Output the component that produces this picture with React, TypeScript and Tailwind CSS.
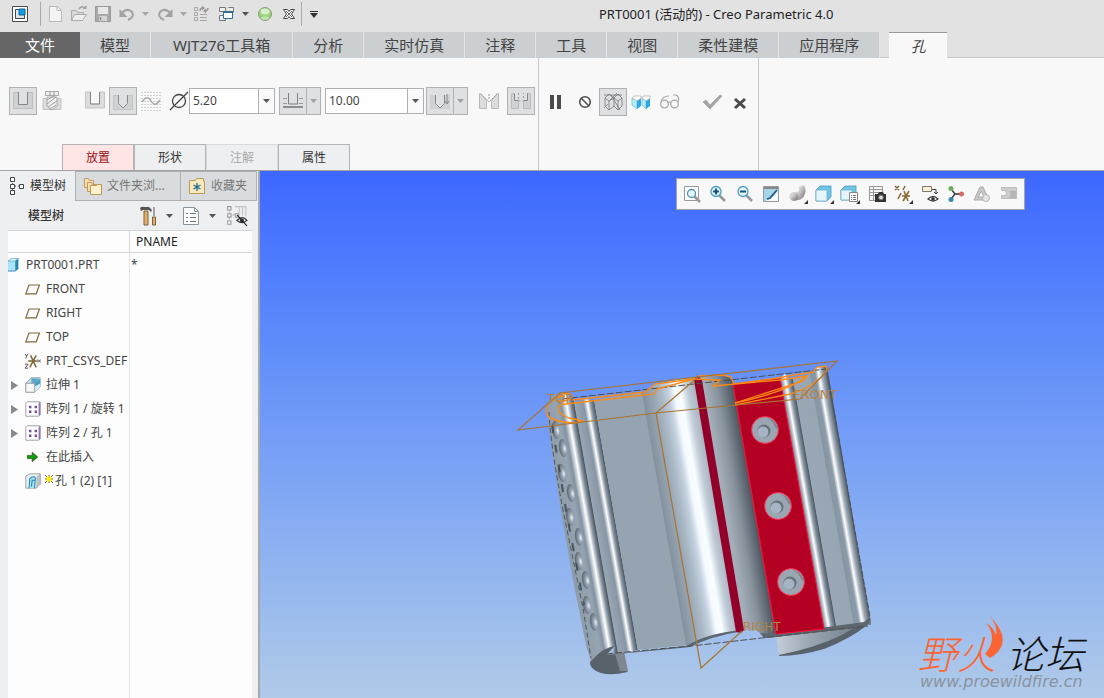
import { useState, type ReactNode } from "react";

const ribbonTabs = ["模型", "WJT276工具箱", "分析", "实时仿真", "注释", "工具", "视图", "柔性建模", "应用程序"];

interface IconProps {
  children: ReactNode;
  className?: string;
}

// All toolbar drawings share a 20x20 grid
function Icon({ children, className = "w-5 h-5" }: IconProps) {
  return (
    <svg viewBox="0 0 20 20" fill="none" className={`shrink-0 ${className}`} aria-hidden="true">
      {children}
    </svg>
  );
}

function Caret({ className = "text-[#555]" }: { className?: string }) {
  return (
    <svg viewBox="0 0 7 4" className={`w-[7px] h-1 shrink-0 ${className}`} aria-hidden="true">
      <path d="M0 0h7L3.5 4z" fill="currentColor" />
    </svg>
  );
}

interface ToolButtonProps {
  label: string;
  children: ReactNode;
  className?: string;
}

function ToolButton({ label, children, className = "w-6 h-6" }: ToolButtonProps) {
  return (
    <button type="button" title={label} aria-label={label} className={`flex shrink-0 items-center justify-center ${className}`}>
      {children}
    </button>
  );
}

const pressed = "w-7 h-7 border border-[#b0b1b3] bg-[#dfe0e2]";

function QuickAccess() {
  return (
    <div className="flex items-center h-7">
      <ToolButton label="窗口" className="w-10 h-7">
        <Icon>
          <path d="M2.5 2.5h15v15h-15z" fill="#fff" stroke="#4a4a4a" />
          <path d="M5.5 5.5h9v9h-9z" fill="#dde5ea" stroke="#3c4a55" />
          <path d="M9 5h6v6H9z" fill="#0c9fe5" stroke="#1b5f86" />
        </Icon>
      </ToolButton>
      <span className="w-px h-6 bg-[#aaa]" />
      <div className="flex items-center pl-0.5">
        <ToolButton label="新建">
          <Icon>
            <path d="M4.5 2.500h8l4 4v11h-12z" fill="#f4f4f4" stroke="#b8b8b8" />
            <path d="M12 2.500v4h4" stroke="#b8b8b8" />
          </Icon>
        </ToolButton>
        <ToolButton label="打开">
          <Icon>
            <path d="M2.500 16.500v-10h5l1 2h6v2" fill="#dadada" stroke="#aaa" />
            <path d="M2.500 16.500l3-6h12l-4 6z" fill="#ededed" stroke="#aaa" />
            <path d="M10 5q3-4 6-1" stroke="#a0a0a0" strokeWidth="1.500" />
            <path d="M13.500 5h4V1z" fill="#a0a0a0" />
          </Icon>
        </ToolButton>
        <ToolButton label="保存">
          <Icon>
            <path d="M2.500 2.500h15v15h-15z" fill="#a9a9a9" stroke="#999" />
            <path d="M5 3h10v7H5z" fill="#e8e8e8" />
            <path d="M6 12h8v5H6z" fill="#d5d5d5" />
            <path d="M7.500 13v3" stroke="#888" strokeWidth="1.500" />
          </Icon>
        </ToolButton>
        <ToolButton label="撤消">
          <Icon>
            <path d="M5 9q4-5 9-2 5 5-3 9" stroke="#a3a3a3" strokeWidth="2" />
            <path d="M2.500 5v8h8z" fill="#a3a3a3" />
          </Icon>
        </ToolButton>
        <ToolButton label="撤消列表" className="w-3 h-6"><Caret className="text-[#a6a6a6]" /></ToolButton>
        <ToolButton label="重做" className="w-7 h-6">
          <Icon>
            <path d="M15 9q-4-5-9-2-5 5 3 9" stroke="#a3a3a3" strokeWidth="2" />
            <path d="M17.500 5v8h-8z" fill="#a3a3a3" />
          </Icon>
        </ToolButton>
        <ToolButton label="重做列表" className="w-2 h-6"><Caret className="text-[#a6a6a6]" /></ToolButton>
        <ToolButton label="重新生成" className="w-7 h-6">
          <Icon>
            <path d="M3.500 3.500h3v3h-3zM3.500 8.500h3v3h-3zM3.500 13.500h3v3h-3zM9 10.500h7M9 13.500h7M9 16.500h7" stroke="#a8a8a8" />
            <path d="M9 7q0-3 3-3M17 4q0 3-3 3" stroke="#999" strokeWidth="1.500" />
            <path d="M11 1.500l3 2.500-3 2.500zM15 4.500L12 7l3 2.500z" fill="#999" />
          </Icon>
        </ToolButton>
        <ToolButton label="窗口列表">
          <Icon>
            <path d="M2.500 3.500h6v4h-6zM11.500 3.500h5v5M2.500 11.500h6v5h-6z" fill="#eee" stroke="#777" />
            <path d="M6.500 7.500h9v7h-9z" fill="#fff" stroke="#31708f" />
            <path d="M6 8h10" stroke="#31708f" strokeWidth="2" />
          </Icon>
        </ToolButton>
        <ToolButton label="更多窗口" className="w-3 h-6"><Caret /></ToolButton>
        <ToolButton label="状态" className="w-7 h-6">
          <Icon>
            <circle cx="10" cy="10" r="6.500" fill="#9bd07d" stroke="#8a9b83" />
            <ellipse cx="10" cy="7.500" rx="4.500" ry="3" fill="#d6efc8" />
            <ellipse cx="10" cy="14" rx="4" ry="1.500" fill="#c3e8ae" />
          </Icon>
        </ToolButton>
        <ToolButton label="关闭" className="w-5 h-6">
          <Icon>
            <path d="M4.500 5.500h4l1.500 2 1.500-2h4L12.500 10l3 4.500h-4l-1.500-2-1.500 2h-4l3-4.500z" fill="#fff" stroke="#444" />
            <path d="M7 7l6 6M13 7l-6 6" stroke="#666" />
          </Icon>
        </ToolButton>
      </div>
      <span className="w-px h-6 ml-0.5 bg-[#aaa]" />
      <ToolButton label="自定义" className="w-6 h-6">
        <Icon>
          <path d="M6 7.500h8" stroke="#333" />
          <path d="M6 9h8l-4 5z" fill="#333" />
        </Icon>
      </ToolButton>
    </div>
  );
}

function Combo({ label, value, onChange, className }: { label: string; value: string; onChange: (v: string) => void; className: string }) {
  return (
    <div className={`flex h-[26px] shrink-0 border border-[#aeb0b2] bg-white ${className}`}>
      <input aria-label={label} value={value} onChange={(e) => onChange(e.target.value)} className="min-w-0 flex-1 px-[3px] text-[12px] text-[#444] outline-none" />
      <button type="button" aria-label={`${label}列表`} className="flex w-4 items-center justify-center border-l border-[#aeb0b2] bg-[#fafafa]">
        <Caret />
      </button>
    </div>
  );
}

function SplitButton({ label, children }: { label: string; children: ReactNode }) {
  return (
    <div className="flex h-7 w-[42px] shrink-0 border border-[#b0b1b3] bg-[#dfe0e2]">
      <button type="button" aria-label={label} className="flex flex-1 items-center justify-center">{children}</button>
      <button type="button" aria-label={`${label}选项`} className="flex w-3.5 items-center justify-center border-l border-[#b0b1b3]">
        <Caret className="text-[#a0a0a0]" />
      </button>
    </div>
  );
}

function HoleControls() {
  const [diameter, setDiameter] = useState("5.20");
  const [depth, setDepth] = useState("10.00");
  return (
    <div className="flex items-center h-7 mt-[29px] pl-[9px]">
      <ToolButton label="简单孔" className={pressed}>
        <Icon>
          <path d="M.5 1.500h19v16H.500z" fill="#d0d1d2" stroke="#bfbfbf" />
          <path d="M5 1h10v13H5z" fill="#dfe0e2" />
          <path d="M5.500 1v12.500h9V1" stroke="#858585" />
        </Icon>
      </ToolButton>
      <ToolButton label="标准孔" className="w-7 h-7 ml-px">
        <Icon>
          <path d="M1 7.500h18v11H1z" fill="#dcdcdc" stroke="#c4c4c4" />
          <path d="M5 6h10v9l-5 4-5-4z" fill="#f3f3f3" stroke="#999" strokeWidth=".8" />
          <path d="M3.500.500h13v4h-13z" fill="#eee" stroke="#aaa" />
          <path d="M5 9l7-4M5 13l9-7M6 16l9-6M8 18l6-4M8 1v4M12 1v4" stroke="#999" />
        </Icon>
      </ToolButton>
      <ToolButton label="矩形轮廓" className="w-7 h-7 ml-[15px]">
        <Icon>
          <path d="M.5 1h5v12h9V1h5v16H.500z" fill="#dcdcdc" stroke="#c4c4c4" />
          <path d="M5.500 1v12h9V1" stroke="#858585" />
        </Icon>
      </ToolButton>
      <ToolButton label="标准轮廓" className={pressed}>
        <Icon>
          <path d="M.5 4.500h19v14H.500z" fill="#d0d1d2" stroke="#c4c4c4" />
          <path d="M5 4h10v9l-5 5-5-5z" fill="#dfe0e2" />
          <path d="M5.500 4v8.500L10 17l4.500-4.500V4" stroke="#8a8a8a" />
        </Icon>
      </ToolButton>
      <ToolButton label="草绘" className="w-7 h-7">
        <Icon>
          <path d="M.5 1.500h19M.5 4.500h19M.5 7.500h19M.5 10.500h19M.5 13.500h19M.5 16.500h19M.5 19.500h19" stroke="#aaa" strokeDasharray="1 2" />
          <path d="M1 11q5-8 9-1t9-1" stroke="#aaa" strokeWidth="1.500" />
        </Icon>
      </ToolButton>
      <Icon className="w-5 h-5 ml-1">
        <circle cx="10" cy="10" r="6.500" stroke="#444" strokeWidth="1.300" />
        <path d="M1 19L19 1" stroke="#444" strokeWidth="1.300" />
      </Icon>
      <Combo label="直径" value={diameter} onChange={setDiameter} className="w-[86px]" />
      <div className="ml-1">
        <SplitButton label="深度类型">
          <Icon>
            <path d="M0 7.500h4M0 12.500h4M16 7.500h4M16 12.500h4" stroke="#999" />
            <path d="M5.500 2v11h9V2" stroke="#808080" />
            <path d="M0 16h20" stroke="#8d8d8d" strokeWidth="2" />
          </Icon>
        </SplitButton>
      </div>
      <Combo label="深度" value={depth} onChange={setDepth} className="ml-1 w-[99px]" />
      <div className="ml-0.5">
        <SplitButton label="钻孔深度">
          <Icon>
            <path d="M0 4h20v14H0z" fill="#d0d1d2" />
            <path d="M5.500 4v8.500L10 17l4.500-4.500V4" fill="#dfe0e2" stroke="#8a8a8a" />
            <path d="M17 3v9M15 10l2 3 2-3" stroke="#888" />
          </Icon>
        </SplitButton>
      </div>
      <ToolButton label="沉头孔" className="w-7 h-7 ml-[7px]">
        <Icon>
          <path d="M.5 2.500h1l6 7v8h-7zM19.500 2.500h-1l-6 7v8h7z" fill="#dcdcdc" stroke="#b8b8b8" />
          <path d="M2 3l8 8 8-8M10 3v6" stroke="#999" strokeDasharray="2 1" />
        </Icon>
      </ToolButton>
      <ToolButton label="沉孔" className={`${pressed} ml-1`}>
        <Icon>
          <path d="M.5 2.500h3v7h4v8h-7zM19.500 2.500h-3v7h-4v8h7z" fill="#d0d1d2" stroke="#bbb" />
          <path d="M3.500 2.500v7h4M16.500 2.500v7h-4" stroke="#888" />
          <path d="M7.500 2v8h5V2" stroke="#999" strokeDasharray="2 2" />
        </Icon>
      </ToolButton>
    </div>
  );
}

function FeatureControls() {
  return (
    <div className="flex items-center h-7 mt-[30px] pl-[3px]">
      <ToolButton label="暂停" className="w-7 h-7">
        <Icon><path d="M4 3h4v14H4zM11 3h4v14h-4z" fill="#4b4b4b" /></Icon>
      </ToolButton>
      <ToolButton label="无预览" className="w-7 h-7 ml-px">
        <Icon>
          <circle cx="10" cy="10" r="5.300" stroke="#505050" strokeWidth="1.600" />
          <path d="M6 6l8 8" stroke="#505050" strokeWidth="1.600" />
        </Icon>
      </ToolButton>
      <ToolButton label="分离" className={pressed}>
        <Icon>
          <path d="M2 6l4 3v9l-4-4zM6 9l5-3v8l-5 4M11 6l4 3v9l-4-4M15 9l4-3v8l-4 4M2 6l4-4 5 4 4-4 4 4M1 16l4-4M7 8l7-7M1 3h18M8 3l9 15" stroke="#777" strokeWidth=".8" />
        </Icon>
      </ToolButton>
      <ToolButton label="附着" className="w-7 h-7">
        <Icon>
          <path d="M1 6l5 3v8l-5-4zM11 6l4 3v8l-4-4z" fill="#b9ecfb" stroke="#6fb9d4" strokeWidth=".7" />
          <path d="M6 9l4-3v8l-4 3zM15 9l4-3v8l-4 3z" fill="#29a9e8" />
          <path d="M1 6l2-2h7v2L6 9zM11 6l1-2h7v2l-4 3z" fill="#fff" stroke="#aaa" strokeWidth=".7" />
        </Icon>
      </ToolButton>
      <ToolButton label="验证" className="w-[30px] h-7">
        <Icon>
          <circle cx="4.500" cy="12" r="3.800" stroke="#a9a9a9" strokeWidth="1.300" />
          <circle cx="14.500" cy="12" r="3.800" stroke="#a9a9a9" strokeWidth="1.300" />
          <path d="M8 11q2-2 3 0M1 10q1-6 8-6M18 10q2-5-2-7h-3" stroke="#a9a9a9" strokeWidth="1.200" />
        </Icon>
      </ToolButton>
      <ToolButton label="确定" className="w-7 h-7 ml-[13px]">
        <Icon><path d="M1 10l3-2 4 5 10-10 2 1L8 17z" fill="#a3a3a3" stroke="#999" strokeWidth=".6" /></Icon>
      </ToolButton>
      <ToolButton label="取消" className="w-7 h-7">
        <Icon><path d="M5 7l10 9M15 7L5 16" stroke="#4a4a4a" strokeWidth="3" /></Icon>
      </ToolButton>
    </div>
  );
}

function Ribbon() {
  return (
    <section className="flex h-[113px] shrink-0 border-b border-[#a3a3a3] bg-[#f8f8f8]">
      <div className="flex w-[539px] shrink-0 flex-col justify-between border-r border-[#c6c8ca]">
        <HoleControls />
        <div className="flex pl-[62px] text-[12px]">
          <button type="button" className="h-[26px] w-[72px] border border-b-0 border-[#b5b5b5] bg-[#ffe5e5] text-[#9b0f16]">放置</button>
          <button type="button" className="h-[26px] w-[72px] border border-b-0 border-[#b5b5b5] bg-[#eeeff1] text-[#333]">形状</button>
          <button type="button" disabled className="h-[26px] w-[72px] border border-b-0 border-[#dadbdc] bg-[#eeeff1] text-[#aaa]">注解</button>
          <button type="button" className="h-[26px] w-[72px] border border-b-0 border-[#b5b5b5] bg-[#eeeff1] text-[#333]">属性</button>
        </div>
      </div>
      <div className="w-[220px] shrink-0 border-r border-[#c6c8ca]">
        <FeatureControls />
      </div>
    </section>
  );
}

const TreeGlyph = () => (
  <Icon className="w-5 h-5">
    <path d="M4.500 2v16M5 10h8" stroke="#555" strokeDasharray="3 2" />
    <path d="M2.500 1.500h4v4h-4zM2.500 8.500h4v4h-4zM2.500 14.500h4v4h-4zM11.500 8.500h4v4h-4z" fill="#fff" stroke="#444" />
  </Icon>
);

const PlaneGlyph = () => (
  <Icon className="w-4 h-4"><path d="M5 5h13l-4 11H1z" stroke="#82683c" strokeWidth="1.500" /></Icon>
);

const PatternGlyph = () => (
  <Icon className="w-4 h-4">
    <path d="M1 3l2-2h16v16l-2 2H1z" fill="#fff" stroke="#8b8894" />
    <path d="M18 2v16" stroke="#8d74b5" strokeWidth="2" />
    <path d="M5 6h3v3H5zM12 6h3v3h-3zM5 12h3v3H5zM12 12h3v3h-3z" fill="#734f9b" />
  </Icon>
);

const PartGlyph = () => (
  <Icon className="w-4 h-4">
    <path d="M0 5h9v13H0z" fill="#a9e4fb" />
    <path d="M0 5l4-3h9L9 5z" fill="#e6f8ff" stroke="#4a9dbd" strokeWidth=".8" />
    <path d="M9 5l4-3v13l-4 3z" fill="#2a87b0" />
    <path d="M0 17.500h9" stroke="#3a7f9c" />
  </Icon>
);

const ExtrudeGlyph = () => (
  <Icon className="w-4 h-4">
    <path d="M1 8l7-7h11v11l-7 7H1z" fill="#bfe2f1" stroke="#8a9299" />
    <path d="M12 8l7-7v11l-7 7z" fill="#cdeefb" />
    <path d="M8 2h10l-6 7H8z" fill="#5aa9cd" />
    <path d="M12 8l7-6v6l-7 4z" fill="#4a9dc4" />
    <path d="M1 8h11v11H1z" fill="#f7f7f7" stroke="#999" />
  </Icon>
);

const HoleGlyph = () => (
  <Icon className="w-4 h-4">
    <path d="M1 4l5-3h13v12l-5 6H1z" fill="#e8eef1" stroke="#8d9499" />
    <path d="M5 19l1-12q4-4 7-1l-1 13M8 17l1-8h3" fill="#a6e2f6" stroke="#2586b0" strokeWidth="1.300" />
    <path d="M15 5v13l4-4V2z" fill="#c2c7ca" stroke="#9aa1a6" strokeWidth=".8" />
  </Icon>
);

// The axis letters are part of the coordinate system symbol
const CsysGlyph = () => (
  <Icon className="w-4 h-4">
    <path d="M4 10h12M7 3l7 15M14 3L6 18" stroke="#7d6234" strokeWidth="1.800" />
    <path d="M0 1l2 3 2-3M2 4L1 7M16 8l4 4M20 8l-4 4M0 14h4l-4 5h4" stroke="#333" />
  </Icon>
);

const InsertGlyph = () => (
  <Icon className="w-4 h-4">
    <path d="M3 8h6V4l7 6-7 6v-4H3z" fill="#0a9a0a" stroke="#333d14" strokeWidth=".8" />
  </Icon>
);

interface TreeRow {
  id: string;
  label: string;
  icon: ReactNode;
  expandable?: boolean;
  isNew?: boolean;
}

const treeRows: TreeRow[] = [
  { id: "front", label: "FRONT", icon: <PlaneGlyph /> },
  { id: "right", label: "RIGHT", icon: <PlaneGlyph /> },
  { id: "top", label: "TOP", icon: <PlaneGlyph /> },
  { id: "csys", label: "PRT_CSYS_DEF", icon: <CsysGlyph /> },
  { id: "extrude", label: "拉伸 1", icon: <ExtrudeGlyph />, expandable: true },
  { id: "pattern1", label: "阵列 1 / 旋转 1", icon: <PatternGlyph />, expandable: true },
  { id: "pattern2", label: "阵列 2 / 孔 1", icon: <PatternGlyph />, expandable: true },
  { id: "insert", label: "在此插入", icon: <InsertGlyph /> },
  { id: "hole", label: "孔 1 (2) [1]", icon: <HoleGlyph />, isNew: true },
];

function ModelTree() {
  return (
    <div className="ml-2 mr-1.5 min-h-0 flex-1 border-t border-[#d3d5d7] bg-[#fdfdfd] flex flex-col">
      <table className="w-full table-fixed border-separate border-spacing-0 text-[12px] text-[#444]">
        <thead>
          <tr>
            <th className="h-[22px] w-[122px] border-b border-r border-[#d3d5d7] p-0" aria-label="名称" />
            <th className="h-[22px] border-b border-[#d3d5d7] p-0 pl-1.5 text-left font-normal text-[#222]">PNAME</th>
          </tr>
        </thead>
        <tbody>
          <tr>
            <td className="h-6 border-r border-[#e3e4e6] p-0">
              <div className="flex items-center gap-0.5"><PartGlyph /><span>PRT0001.PRT</span></div>
            </td>
            <td className="p-0 pl-px">*</td>
          </tr>
          {treeRows.map((row) => (
            <tr key={row.id}>
              <td className="h-6 overflow-hidden border-r border-[#e3e4e6] p-0">
                <div className="flex items-center whitespace-nowrap">
                  <span className="w-[17px] shrink-0">
                    {row.expandable && (
                      <button type="button" aria-label={`展开 ${row.label}`} className="block pl-[3px]">
                        <svg viewBox="0 0 7 9" className="w-[7px] h-[9px]"><path d="M0 0l7 4.500L0 9z" fill="#888" /></svg>
                      </button>
                    )}
                  </span>
                  {row.icon}
                  {row.isNew && (
                    <svg viewBox="0 0 8 8" className="ml-1 w-2 h-2 mb-1 shrink-0">
                      <path d="M0 0l8 8M8 0L0 8M4 0v8M0 4h8" stroke="#333" strokeWidth=".8" />
                      <path d="M1.500 1.500h5v5h-5z" fill="#ffef00" />
                    </svg>
                  )}
                  <span className={row.isNew ? "ml-0.5" : "ml-[5px]"}>{row.label}</span>
                </div>
              </td>
              <td />
            </tr>
          ))}
        </tbody>
      </table>
      <div className="w-[122px] flex-1 border-r border-[#e3e4e6]" />
    </div>
  );
}

function FolderIcon({ star = false }: { star?: boolean }) {
  return (
    <Icon>
      {star ? (
        <>
          <path d="M2.500 4.500h6l1-2h7v3h1v12h-15z" fill="#fbe9bd" stroke="#b99a5b" />
          <path d="M10 7v8M6.500 9l7 4M13.500 9l-7 4" stroke="#1d6d8f" strokeWidth="1.300" />
        </>
      ) : (
        <>
          <path d="M1.500 2.500h4l1 2h4v7h-9z" fill="#f7deb0" stroke="#c4975a" />
          <path d="M4.500 6.500h4l1 2h5v7h-10z" fill="#f7deb0" stroke="#c4975a" />
          <path d="M7.500 9.500h6l1-1h4v10h-11z" fill="#fdf0cf" stroke="#c4975a" />
        </>
      )}
    </Icon>
  );
}

function Sidebar() {
  return (
    <aside className="flex w-[260px] shrink-0 flex-col border-r-2 border-[#a7a9ac] bg-[#eeeff1]">
      <div role="tablist" className="flex h-[30px] shrink-0 text-[12px] text-[#777]">
        <button type="button" role="tab" aria-selected="true" className="flex w-[75px] items-center pl-2 text-[#333]">
          <TreeGlyph /><span className="ml-0.5 whitespace-nowrap">模型树</span>
        </button>
        <button type="button" role="tab" aria-selected="false" className="flex w-[106px] items-center gap-1 border border-[#adafb1] bg-[#d9dcde] pl-[7px]">
          <FolderIcon /><span className="whitespace-nowrap">文件夹浏...</span>
        </button>
        <button type="button" role="tab" aria-selected="false" className="flex w-[76px] items-center gap-1 border border-l-0 border-[#adafb1] bg-[#d9dcde] pl-1.5">
          <FolderIcon star /><span className="whitespace-nowrap">收藏夹</span>
        </button>
      </div>
      <div className="flex h-[29px] shrink-0 items-center pl-7 pr-[7px]">
        <h2 className="flex-1 text-[12px] font-medium text-[#333]">模型树</h2>
        <ToolButton label="设置">
          <Icon>
            <path d="M1 2q2-2 4-1h5l3 3-1 2-2-2H4L2 5z" fill="#555" />
            <path d="M5 5h4v14H5z" fill="#e0b06a" stroke="#7d6338" />
            <path d="M15 1v9" stroke="#888" strokeWidth="1.500" />
            <path d="M13.500 11h3v8h-3z" fill="#e0b06a" stroke="#7d6338" />
          </Icon>
        </ToolButton>
        <ToolButton label="设置列表" className="w-4 h-6"><Caret /></ToolButton>
        <ToolButton label="显示" className="w-7 h-6">
          <Icon>
            <path d="M2.500 1.500h11l4 4v13h-15z" fill="#fafcfd" stroke="#8795a0" />
            <path d="M13.500 1.500v4h4" stroke="#8795a0" />
            <path d="M5 7.500h2M5 11.500h2M5 15.500h2M9 7.500h6M9 11.500h6M9 15.500h6" stroke="#777" />
          </Icon>
        </ToolButton>
        <ToolButton label="显示列表" className="w-3.5 h-6"><Caret /></ToolButton>
        <ToolButton label="隐藏列" className="w-7 h-6 ml-1">
          <Icon className="w-[22px] h-[22px]">
            <path d="M3 1v17M5 9h6M8 1.500h4v6M12 1.500h3v8M15 1.500h3v9" stroke="#c4c4c4" />
            <path d="M1.500 1.500h3v3h-3zM1.500 8h3v3h-3zM1.500 14.500h3v3h-3zM8.500 8h3v3h-3z" fill="#fff" stroke="#999" />
            <path d="M10 14q5-5 9 0-4 4-9 0z" stroke="#333" strokeWidth="1.200" />
            <circle cx="14.500" cy="14" r="1.800" fill="#333" />
            <path d="M10 9l9 10" stroke="#222" />
          </Icon>
        </ToolButton>
      </div>
      <ModelTree />
    </aside>
  );
}

const Corner = () => <path d="M20 16v4h-4z" fill="#333" />;

function ViewToolbar() {
  return (
    <div className="absolute right-[79px] top-[7px] flex h-8 w-[349px] items-center justify-between border border-[#a5a5a5] bg-[#f8f8f8] px-[3px]">
      <ToolButton label="重新调整">
        <Icon>
          <path d="M2.500 2.500h14v14h-14z" stroke="#999" fill="#fff" />
          <path d="M12 12l6 6" stroke="#999" strokeWidth="2.500" />
          <circle cx="9.500" cy="9.500" r="4" fill="#e6f6fd" stroke="#4b93b2" strokeWidth="1.300" />
        </Icon>
      </ToolButton>
      <ToolButton label="放大">
        <Icon>
          <path d="M11 11l6 6" stroke="#999" strokeWidth="2.500" />
          <circle cx="8" cy="7.500" r="5" fill="#e6f6fd" stroke="#4b9fc3" strokeWidth="1.300" />
          <path d="M5 7.500h6M8 4.500v6" stroke="#125579" strokeWidth="2" />
        </Icon>
      </ToolButton>
      <ToolButton label="缩小">
        <Icon>
          <path d="M11 11l6 6" stroke="#999" strokeWidth="2.500" />
          <circle cx="8" cy="7.500" r="5" fill="#e6f6fd" stroke="#4b9fc3" strokeWidth="1.300" />
          <path d="M5 7.500h6" stroke="#125579" strokeWidth="2" />
        </Icon>
      </ToolButton>
      <ToolButton label="重画">
        <Icon>
          <path d="M2.500 2.500h15v15h-15z" fill="#a5d5e8" stroke="#999" />
          <path d="M3 3h14v2H3z" fill="#888" />
          <path d="M17 17H4q8-2 13-11z" fill="#f2fafd" />
          <path d="M6 15l3-1 7-8" stroke="#245e7b" strokeWidth="1.800" />
        </Icon>
      </ToolButton>
      <ToolButton label="渲染样式">
        <Icon>
          <path d="M8 8q4 1 3-5l5-2q3 6 0 11-3 5-8 4z" fill="url(#metal)" />
          <circle cx="6" cy="12.500" r="4.500" fill="url(#metal)" />
          <Corner />
        </Icon>
      </ToolButton>
      <ToolButton label="显示样式">
        <Icon>
          <path d="M2 6l4-4h11v11l-4 4H2z" fill="#6ec6e6" stroke="#4c9bb9" strokeWidth=".8" />
          <path d="M2 6h11v11H2z" fill="#e4f6fc" stroke="#72afc6" strokeWidth=".8" />
          <Corner />
        </Icon>
      </ToolButton>
      <ToolButton label="已保存方向">
        <Icon>
          <path d="M1 6l4-4h11v10l-4 4H1z" fill="#6ec6e6" stroke="#4c9bb9" strokeWidth=".8" />
          <path d="M1 6h11v10H1z" fill="#e4f6fc" stroke="#72afc6" strokeWidth=".8" />
          <path d="M9.500 8.500h8v9h-8z" fill="#fff" stroke="#888" />
          <path d="M11 11.500h1M13 11.500h3M11 13.500h1M13 13.500h3M11 15.500h1M13 15.500h3" stroke="#777" />
          <Corner />
        </Icon>
      </ToolButton>
      <ToolButton label="视图管理器">
        <Icon>
          <path d="M2.500 2.500h13v14h-13zM2.500 5.500h13M2.500 8.500h13M2.500 11.500h13M6.500 2.500v14" fill="#f5f5f5" stroke="#999" />
          <path d="M8 10h3l1-2h4l1 2h2v8H8z" fill="#333" />
          <circle cx="14" cy="13.500" r="2.300" fill="#ddd" stroke="#777" />
        </Icon>
      </ToolButton>
      <ToolButton label="基准显示过滤器">
        <Icon>
          <path d="M2 2l4 4M6 2L2 6M12 2l-2 4M8 9l-3 6M9 12h8M11 7l4 10M16 7l-6 10" stroke="#8a672b" strokeWidth="1.500" />
          <Corner />
        </Icon>
      </ToolButton>
      <ToolButton label="注释显示">
        <Icon>
          <path d="M2.500 2.500h9v5h-9z" fill="#fff1cc" stroke="#777" />
          <path d="M12 5.500h4v4M14 8l2 2 2-2" stroke="#444" />
          <path d="M8 15q5-5 10 0-5 4-10 0z" stroke="#444" strokeWidth="1.300" />
          <circle cx="13" cy="15" r="1.800" fill="#333" />
        </Icon>
      </ToolButton>
      <ToolButton label="旋转中心">
        <Icon>
          <path d="M5 5l4 5h7M9 10l-4 5" stroke="#333" strokeWidth="1.300" />
          <circle cx="5" cy="4.500" r="2.500" fill="#6fae5f" />
          <circle cx="15.500" cy="10" r="2.500" fill="#de6767" />
          <circle cx="5" cy="15.500" r="2.500" fill="#3a88ad" />
        </Icon>
      </ToolButton>
      <ToolButton label="仿真">
        <Icon>
          <path d="M2 16L8 3h3l6 13z" fill="#c9c9c9" stroke="#aaa" />
          <path d="M6 13l3.500-6L12 13z" fill="#f8f8f8" stroke="#aaa" />
          <circle cx="14" cy="14" r="3.500" fill="#e4e4e4" stroke="#b5b5b5" />
        </Icon>
      </ToolButton>
      <ToolButton label="截面">
        <Icon>
          <path d="M2.500 3.500h15v11h-15v-3h3q4-2 0-5h-3z" fill="#ccc" stroke="#bdbdbd" />
          <path d="M10 7h7v7H9q5-3 1-7z" fill="#b5b5b5" />
        </Icon>
      </ToolButton>
    </div>
  );
}

// Dimples along the left flank, in model-view coordinates
const dimples = [
  [556, 430], [563, 448], [562, 473], [571, 493], [570, 517],
  [579, 537], [579, 561], [586, 580], [587, 605], [594, 622],
];

const screwHoles = [[765, 430], [778, 506], [791, 582]];

function ModelView() {
  return (
    <svg viewBox="260 171 844 527" preserveAspectRatio="xMidYMid slice" fill="none" className="block h-full w-full" role="img" aria-label="PRT0001">
      <defs>
        <linearGradient id="metal" x1="0" y1="0" x2="1" y2="1">
          <stop offset="0" stopColor="#ddd" />
          <stop offset=".4" stopColor="#ccc" />
          <stop offset="1" stopColor="#666" />
        </linearGradient>
        {/* Isolines follow the slant of the extrusion */}
        <linearGradient id="body" gradientUnits="userSpaceOnUse" x1="530" y1="0" x2="830" y2="0" gradientTransform="matrix(1 0 .175 1 -66.5 0)">
          <stop offset="0" stopColor="#8796a4" />
          <stop offset=".075" stopColor="#97a5b2" />
          <stop offset=".09" stopColor="#8292a1" />
          <stop offset=".108" stopColor="#fff" />
          <stop offset=".12" stopColor="#8c9aa8" />
          <stop offset=".132" stopColor="#4d5760" />
          <stop offset=".135" stopColor="#99a6b3" />
          <stop offset=".155" stopColor="#8d9baa" />
          <stop offset=".165" stopColor="#8796a4" />
          <stop offset=".178" stopColor="#fff" />
          <stop offset=".188" stopColor="#8c9aa8" />
          <stop offset=".2" stopColor="#515c66" />
          <stop offset=".202" stopColor="#96a4b1" />
          <stop offset=".364" stopColor="#96a4b1" />
          <stop offset=".367" stopColor="#84929f" />
          <stop offset=".4" stopColor="#97a5b3" />
          <stop offset=".43" stopColor="#acb9c7" />
          <stop offset=".455" stopColor="#c4d1df" />
          <stop offset=".475" stopColor="#f4faff" />
          <stop offset=".495" stopColor="#f8fdff" />
          <stop offset=".52" stopColor="#c0cbd6" />
          <stop offset=".545" stopColor="#a9b5c1" />
          <stop offset=".58" stopColor="#a2adb8" />
          <stop offset=".62" stopColor="#87929c" />
          <stop offset=".66" stopColor="#59646e" />
          <stop offset=".68" stopColor="#505a63" />
          <stop offset=".838" stopColor="#8796a4" />
          <stop offset=".851" stopColor="#fff" />
          <stop offset=".862" stopColor="#8c9aa8" />
          <stop offset=".875" stopColor="#515c66" />
          <stop offset=".878" stopColor="#9aa8b5" />
          <stop offset=".935" stopColor="#98a6b3" />
          <stop offset=".938" stopColor="#8695a3" />
          <stop offset=".955" stopColor="#8c9ba9" />
          <stop offset=".966" stopColor="#fff" />
          <stop offset=".978" stopColor="#9ba8b5" />
          <stop offset=".996" stopColor="#4d5760" />
        </linearGradient>
        <linearGradient id="lip" x1="0" x2="1" y1="0" y2="0">
          <stop offset="0" stopColor="#c4ced9" />
          <stop offset=".4" stopColor="#98a4b1" />
          <stop offset="1" stopColor="#6d7882" />
        </linearGradient>
        <radialGradient id="dimple" cx=".7" cy=".55" r=".7">
          <stop offset="0" stopColor="#eaf2fa" />
          <stop offset=".35" stopColor="#9ba8b5" />
          <stop offset="1" stopColor="#57626c" />
        </radialGradient>
      </defs>

      {/* Inner surfaces showing below the body */}
      <path d="M776 634L779 656Q815 651 842 637L866 622z" fill="url(#lip)" />
      <path d="M779 655Q815 648 842 635L852 629 870 618 869 624Q848 640 824 649 800 656 779 656z" fill="#58626b" />
      <path d="M606 654L624 652 628 672 610 674z" fill="#88949f" />

      <path d="M548 403L553 396 560 393 573 397 576 403 583 399 594 400 645 392 655 384 694 377 725 376Q733 378 733 384L778 379 785 374 791 379 812 373 817 367 827 366 870 617 862 625 824 629 776 635 762 635 756 630 741 630Q708 634 688 645L636 650 612 654 615 646 603 651 591 662 586 645 573 580 560 505 549 430Q546 412 548 403z" fill="url(#body)" />
      <path d="M615 646Q604 648 597 655L590 662Q589 669 601 673 612 676 627 672L624 654 606 655z" fill="#58626b" />
      <path d="M615 654L624 653 628 671 620 671z" fill="#7d8893" />
      <path d="M606 655L686 646Q708 633 741 630L738 632Q712 636 690 647L650 651 606 655z" fill="#5d6770" />
      <path d="M760 633L776 634 864 622 870 617 869 624 854 628 776 637 764 638z" fill="#5d6770" />

      {dimples.map(([x, y]) => (
        <ellipse key={`${x}-${y}`} cx={x} cy={y} rx="4" ry="9" transform={`rotate(-8 ${x} ${y})`} fill="url(#dimple)" />
      ))}
      <path d="M549 412q1 30 14 98l20 98 8 50" stroke="#4d5760" strokeDasharray="5 3" />
      <path d="M552 425l14 85 18 95" stroke="#48525b" strokeWidth="2" strokeDasharray="8 12" />
      <path d="M826 366l44 251" stroke="#48525b" strokeDasharray="6 2" />

      {/* Selected faces */}
      <path d="M694 380l4-4 4 4 42 250-3 3-5-1z" fill="#930029" />
      <path d="M733 384l47-6 44 251-48 5z" fill="#b40023" stroke="#ff0c36" />
      <path d="M731 382l43 251" stroke="#5c5059" />
      {screwHoles.map(([x, y]) => (
        <g key={y}>
          <circle cx={x} cy={y} r="13.500" fill="#9aa6b1" stroke="#ff2346" />
          <path d={`M${x + 2} ${y - 12}q10 2 11 12l-3-3q-2-6-8-9z`} fill="#7c8893" />
          <circle cx={x - 1} cy={y + 1} r="6.500" fill="#65717b" />
          <circle cx={x - 2} cy={y + 2} r="5.500" fill="#a6b4c3" />
        </g>
      ))}

      <path d="M562 399l264-30M606 654l94-9 168-19M870 618v7" stroke="#4f4f4c" strokeDasharray="7 2" />

      {/* Highlighted edges */}
      <g stroke="#ff8a12" strokeWidth="1.300">
        <path d="M554 400Q546 403 546 412 548 422 575 423L583 421 569 418Q558 414 558 409 559 404 566 404L654 394 657 389 694 379 720 380 712 387" />
        <path d="M555 399q0-4 8-5 9-1 9 2 0 4-9 5t-6-4l8-1M572 400l73-8 10-8 38-5M698 376l25-1 8 2 3 7 44-6 10-2 26-4M714 386l66-6 27-4-4 5-68 22M812 373l5-6 9-1 1 4Q815 387 790 394L735 405" />
        <path d="M735 403Q790 391 807 376" />
      </g>
      <path d="M518 430l42-37 277-32-37 38-74 7-70 7zM698 377l-42 36 45 255 41-37" stroke="#a97332" strokeWidth="1.200" />
      <g fill="#b58244" fontSize="13" className="font-['DejaVu_Sans',sans-serif]">
        <text x="547" y="403">TOP</text>
        <text x="793" y="399">FRONT</text>
        <text x="743" y="631" fontSize="12">RIGHT</text>
      </g>
    </svg>
  );
}

function Watermark() {
  return (
    <div className="absolute bottom-[7px] right-[18px] w-[168px]">
      <div className="flex justify-between pr-0.5 text-[39px] font-light italic leading-[42px] font-['Noto_Sans_CJK_SC',sans-serif]">
        <span className="text-[#fc6533]">野火</span>
        <span className="text-[#111]">论坛</span>
      </div>
      <a href="#forum" className="block pl-0.5 text-[16px] italic leading-[18px] text-[#8a939f] font-['DejaVu_Sans',sans-serif]">www.proewildfire.cn</a>
      <svg viewBox="0 0 20 44" className="absolute left-[65px] -top-4 h-11 w-5" aria-hidden="true">
        <path d="M6 0q20 21 11 34-4 6-10 9l-5-4q7-8 7-16 0-8-6-15 8 5 10 12 2-9-7-20z" fill="#fc6533" />
      </svg>
    </div>
  );
}

export default function App() {
  return (
    <div className="flex h-screen min-h-[560px] flex-col overflow-hidden bg-[#e2e2e2] font-['Noto_Sans','Noto_Sans_CJK_SC',sans-serif] text-[#444]">
      <header className="shrink-0">
        <div className="flex h-8 items-start">
          <QuickAccess />
          <h1 className="flex-1 pl-[273px] text-[13px] leading-7 text-[#222]">PRT0001 (活动的) - Creo Parametric 4.0</h1>
        </div>
        <nav className="flex h-[26px] border-b border-[#c8c8c8] text-[15px]">
          <button type="button" className="h-[26px] w-20 bg-[#666] leading-6 text-white">文件</button>
          {ribbonTabs.map((tab) => (
            <button key={tab} type="button" className={`h-[26px] whitespace-nowrap border-r border-[#e4e4e4] bg-[#cbcfd2] leading-6 ${tab.length > 5 ? "px-[22px]" : "px-5"}`}>{tab}</button>
          ))}
          <button type="button" className="ml-[9px] h-[26px] w-[58px] border-t border-[#999] bg-[#f8f8f8] italic leading-6">孔</button>
        </nav>
      </header>
      <Ribbon />
      <div className="flex min-h-0 flex-1">
        <Sidebar />
        <main className="relative min-w-0 flex-1 overflow-hidden bg-linear-to-b from-[#3d67ff] to-[#b0cae8]">
          <ModelView />
          <ViewToolbar />
          <Watermark />
        </main>
      </div>
    </div>
  );
}
